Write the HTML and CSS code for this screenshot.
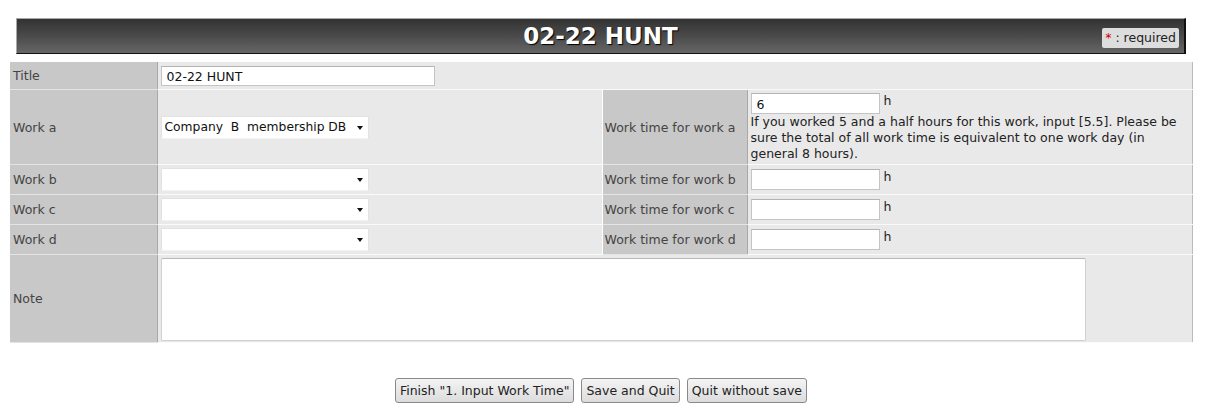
FILE: index.html
```html
<!DOCTYPE html>
<html>
<head>
<meta charset="utf-8">
<link rel="stylesheet" href="styles.css">
</head>
<body>
<div class="page">
  <div class="header">
    <h1 class="title">02-22 HUNT</h1>
    <span class="req"><span class="star">*</span> : required</span>
  </div>
  <table class="form">
    <colgroup>
      <col class="c1"><col class="c2"><col class="c3"><col class="c4">
    </colgroup>
    <tr class="r-title">
      <th>Title</th>
      <td colspan="3"><input class="txt-title" type="text" value="02-22 HUNT"></td>
    </tr>
    <tr class="r-worka">
      <th>Work a</th>
      <td><span class="sel"><select><option>Company&nbsp; B&nbsp; membership DB</option></select></span></td>
      <th class="th2">Work time for work a</th>
      <td class="time">
        <div class="timeline"><input class="txt-time" type="text" value="6"><span class="unit">h</span></div>
        <div class="help">If you worked 5 and a half hours for this work, input [5.5]. Please be sure the total of all work time is equivalent to one work day (in general 8 hours).</div>
      </td>
    </tr>
    <tr class="r-work">
      <th>Work b</th>
      <td><span class="sel"><select><option></option></select></span></td>
      <th class="th2">Work time for work b</th>
      <td class="time"><div class="timeline"><input class="txt-time" type="text" value=""><span class="unit">h</span></div></td>
    </tr>
    <tr class="r-work">
      <th>Work c</th>
      <td><span class="sel"><select><option></option></select></span></td>
      <th class="th2">Work time for work c</th>
      <td class="time"><div class="timeline"><input class="txt-time" type="text" value=""><span class="unit">h</span></div></td>
    </tr>
    <tr class="r-work">
      <th>Work d</th>
      <td><span class="sel"><select><option></option></select></span></td>
      <th class="th2">Work time for work d</th>
      <td class="time"><div class="timeline"><input class="txt-time" type="text" value=""><span class="unit">h</span></div></td>
    </tr>
    <tr class="r-note">
      <th>Note</th>
      <td colspan="3" class="note-cell"><textarea class="note"></textarea></td>
    </tr>
  </table>
  <div class="buttons">
    <button class="btn">Finish "1. Input Work Time"</button>
    <button class="btn">Save and Quit</button>
    <button class="btn">Quit without save</button>
  </div>
</div>
</body>
</html>
```
FILE: styles.css
```css
html, body {
  margin: 0;
  padding: 0;
  background: #fff;
}
body {
  font-family: "DejaVu Sans", Verdana, sans-serif;
  font-size: 12.5px;
  color: #222;
}
.page {
  width: 1182px;
  margin-left: 10px;
  padding-top: 18px;
}
.header {
  margin: 0 6px 0 6px;
  height: 34px;
  border: 1px solid #a8a8a8;
  border-bottom-color: #111;
  border-right: 2px solid #111;
  background: linear-gradient(#333 0%, #4a4a4a 50%, #666 100%);
  display: flex;
  align-items: center;
  justify-content: center;
  position: relative;
}
.title {
  margin: 0;
  font-family: "DejaVu Sans", Verdana, sans-serif;
  font-weight: bold;
  font-size: 23px;
  color: #fff;
  text-shadow: 1px 1px 1px #000;
}
.req {
  position: absolute;
  right: 5px;
  top: 9px;
  height: 20px;
  line-height: 20px;
  padding: 0 3px;
  background: #ddd;
  border-radius: 2px;
  color: #222;
  font-size: 12.5px;
}
.star {
  color: #c00;
}
.form {
  margin-top: 8px;
  width: 1182px;
  border-collapse: collapse;
  table-layout: fixed;
  border-right: 1px solid #bbb;
  border-bottom: 1px solid #c4c4c4;
}
.c1 { width: 147px; }
.c2 { width: 445px; }
.c3 { width: 145px; }
.c4 { width: 445px; }
.form th {
  background: #c8c8c8;
  color: #444;
  font-weight: normal;
  text-align: left;
  padding: 0 0 0 3px;
  border-right: 1px solid #a8a8a8;
  border-bottom: 1px solid #e4e4e4;
  border-top: 1px solid #b8b8b8;
  vertical-align: middle;
}
.form th.th2 {
  padding-left: 2px;
  border-left: 1px solid #fff;
}
.form td {
  background: #e9e9e9;
  padding: 0 3px;
  border-top: 1px solid #c8c8c8;
  border-bottom: 1px solid #fafafa;
  vertical-align: middle;
}
.form tr:first-child th,
.form tr:first-child td {
  border-top: none;
}
.r-title th, .r-title td { height: 27px; }
.r-work th, .r-work td { height: 29px; }
.r-note th, .r-note td { height: 84px; }
input[type=text], textarea, select {
  font-family: "DejaVu Sans", Verdana, sans-serif;
  font-size: 12.5px;
  color: #111;
  box-sizing: border-box;
  outline: none;
}
.txt-title {
  width: 274px;
  height: 20px;
  border: 1px solid #c4c4c4;
  border-top-color: #b4b4b4;
  padding: 1px 5px 0;
  font-size: 10.5px;
  display: block;
}
.sel {
  display: inline-block;
  position: relative;
  vertical-align: middle;
}
.sel select {
  -webkit-appearance: none;
  appearance: none;
  width: 208px;
  height: 23px;
  border: 1px solid #e2e2e2;
  border-bottom-color: #f2f2f2;
  border-radius: 2px;
  background: #fff;
  padding: 0 16px 0 3px;
  display: block;
  font-size: 12.3px;
}
.sel::after {
  content: "";
  position: absolute;
  right: 6px;
  top: 10px;
  border-left: 3.5px solid transparent;
  border-right: 3.5px solid transparent;
  border-top: 4px solid #111;
}
.r-worka td.time {
  vertical-align: top;
  padding-top: 3px;
  padding-bottom: 2px;
}
.timeline {
  display: flex;
  align-items: flex-start;
}
.txt-time {
  width: 129px;
  height: 21px;
  border: 1px solid #c4c4c4;
  border-top-color: #b4b4b4;
  padding: 2px 5px 0;
}
.unit {
  margin-left: 4px;
  line-height: 16px;
  color: #222;
}
.help {
  line-height: 16px;
  margin-right: 2px;
  color: #222;
}
.form td.note-cell {
  vertical-align: top;
  padding-top: 3px;
}
.note {
  display: block;
  width: 925px;
  height: 83px;
  margin: 0;
  border: 1px solid #d0d0d0;
  border-top-color: #b8b8b8;
  border-radius: 2px;
  resize: none;
}
.buttons {
  display: flex;
  justify-content: center;
  gap: 7px;
  margin-top: 35px;
}
.btn {
  height: 25px;
  padding: 0 4px;
  font-family: "DejaVu Sans", Verdana, sans-serif;
  font-size: 12.5px;
  color: #222;
  background: linear-gradient(#f4f4f4, #dcdcdc);
  border: 1px solid #8a8a8a;
  border-radius: 3px;
}
```
